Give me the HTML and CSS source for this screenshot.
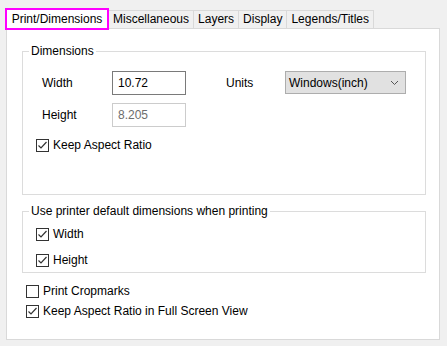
FILE: index.html
```html
<!DOCTYPE html>
<html lang="en">
<head>
    <meta charset="UTF-8">
    <title>Print/Dimensions</title>
    <link rel="stylesheet" href="styles.css">
</head>
<body>
    <div class="dialog">
        <div class="tabs">
            <div class="tab active">Print/Dimensions</div>
            <div class="tab">Miscellaneous</div>
            <div class="tab">Layers</div>
            <div class="tab">Display</div>
            <div class="tab">Legends/Titles</div>
        </div>
        <div class="panel">
            <fieldset class="group">
                <legend>Dimensions</legend>
                <div class="group-body dims-body">
                    <div class="dims">
                        <label>Width</label>
                        <input class="field" type="text" value="10.72">
                        <label>Units</label>
                        <div class="select">
                            <span>Windows(inch)</span>
                            <svg width="9" height="6" viewBox="0 0 9 6"><path d="M1 1 L4.5 4.5 L8 1" fill="none" stroke="#555" stroke-width="1"/></svg>
                        </div>
                        <label>Height</label>
                        <input class="field" type="text" value="8.205" disabled>
                    </div>
                    <div class="check-row aspect">
                        <span class="check on"><svg width="11" height="11" viewBox="0 0 11 11"><path d="M1.5 5.5 L4 8 L9.5 2" fill="none" stroke="#333" stroke-width="1.2"/></svg></span>
                        Keep Aspect Ratio
                    </div>
                </div>
            </fieldset>

            <fieldset class="group printer">
                <legend>Use printer default dimensions when printing</legend>
                <div class="group-body printer-body">
                    <div class="check-row">
                        <span class="check on"><svg width="11" height="11" viewBox="0 0 11 11"><path d="M1.5 5.5 L4 8 L9.5 2" fill="none" stroke="#333" stroke-width="1.2"/></svg></span>
                        Width
                    </div>
                    <div class="check-row">
                        <span class="check on"><svg width="11" height="11" viewBox="0 0 11 11"><path d="M1.5 5.5 L4 8 L9.5 2" fill="none" stroke="#333" stroke-width="1.2"/></svg></span>
                        Height
                    </div>
                </div>
            </fieldset>

            <div class="options">
                <div class="check-row">
                    <span class="check"></span>
                    Print Cropmarks
                </div>
                <div class="check-row">
                    <span class="check on"><svg width="11" height="11" viewBox="0 0 11 11"><path d="M1.5 5.5 L4 8 L9.5 2" fill="none" stroke="#333" stroke-width="1.2"/></svg></span>
                    Keep Aspect Ratio in Full Screen View
                </div>
            </div>
        </div>
    </div>
</body>
</html>
```

FILE: styles.css
```css
body {
    margin: 0;
    background: #f0f0f0;
    font-family: "Liberation Sans", Arial, sans-serif;
    font-size: 12px;
    color: #000;
}
.dialog {
    padding: 8px 0 0 6px;
}
.tabs {
    display: flex;
    align-items: flex-end;
}
.tab {
    height: 18px;
    line-height: 17px;
    padding: 0 4px;
    box-sizing: border-box;
    border-top: 1px solid #d9d9d9;
    border-left: 1px solid #d9d9d9;
    background: #f0f0f0;
}
.tab:last-child {
    border-right: 1px solid #d9d9d9;
}
.tab.active {
    position: relative;
    z-index: 1;
    width: 104px;
    height: 22px;
    line-height: 18px;
    margin: 0 0 -2px -1px;
    border: 2px solid #ff00ff;
    background: #fff;
    text-align: center;
}
.tab.active + .tab {
    border-left: none;
}
.panel {
    width: 434px;
    height: 312px;
    box-sizing: border-box;
    border: 1px solid #d9d9d9;
    background: #fff;
    padding: 14px 13px 0 15px;
}
.group {
    margin: 0;
    padding: 0;
    min-width: 0;
    border: 1px solid #dcdcdc;
}
.group legend {
    margin-left: 6px;
    padding: 0 2px;
    line-height: 16px;
}
.group-body {
    padding-left: 13px;
}
.dims-body {
    padding-top: 12px;
    padding-bottom: 41px;
}
.dims {
    display: grid;
    grid-template-columns: 70px 114px 59px 121px;
    grid-auto-rows: 24px;
    row-gap: 8px;
    margin-left: 6px;
    align-items: center;
}
.field {
    width: 74px;
    height: 24px;
    box-sizing: border-box;
    margin: 0;
    padding: 0 5px;
    border: 1px solid #7a7a7a;
    font: inherit;
    color: #000;
    background: #fff;
    outline: none;
}
.field:disabled {
    border-color: #cccccc;
    color: #6d6d6d;
}
.select {
    height: 23px;
    box-sizing: border-box;
    align-self: start;
    display: flex;
    align-items: center;
    justify-content: space-between;
    padding: 0 6px 0 3px;
    border: 1px solid #adadad;
    background: #e1e1e1;
}
.check-row {
    display: flex;
    align-items: center;
    gap: 4px;
    height: 16px;
}
.check {
    width: 13px;
    height: 13px;
    box-sizing: border-box;
    border: 1px solid #333;
    background: #fff;
    display: flex;
    align-items: center;
    justify-content: center;
}
.aspect {
    margin-top: 10px;
}
.printer {
    margin-top: 8px;
}
.printer-body {
    padding-top: 7px;
    padding-bottom: 4px;
    display: flex;
    flex-direction: column;
    gap: 10px;
}
.options {
    margin: 10px 0 0 4px;
    display: flex;
    flex-direction: column;
    gap: 4px;
}
```
